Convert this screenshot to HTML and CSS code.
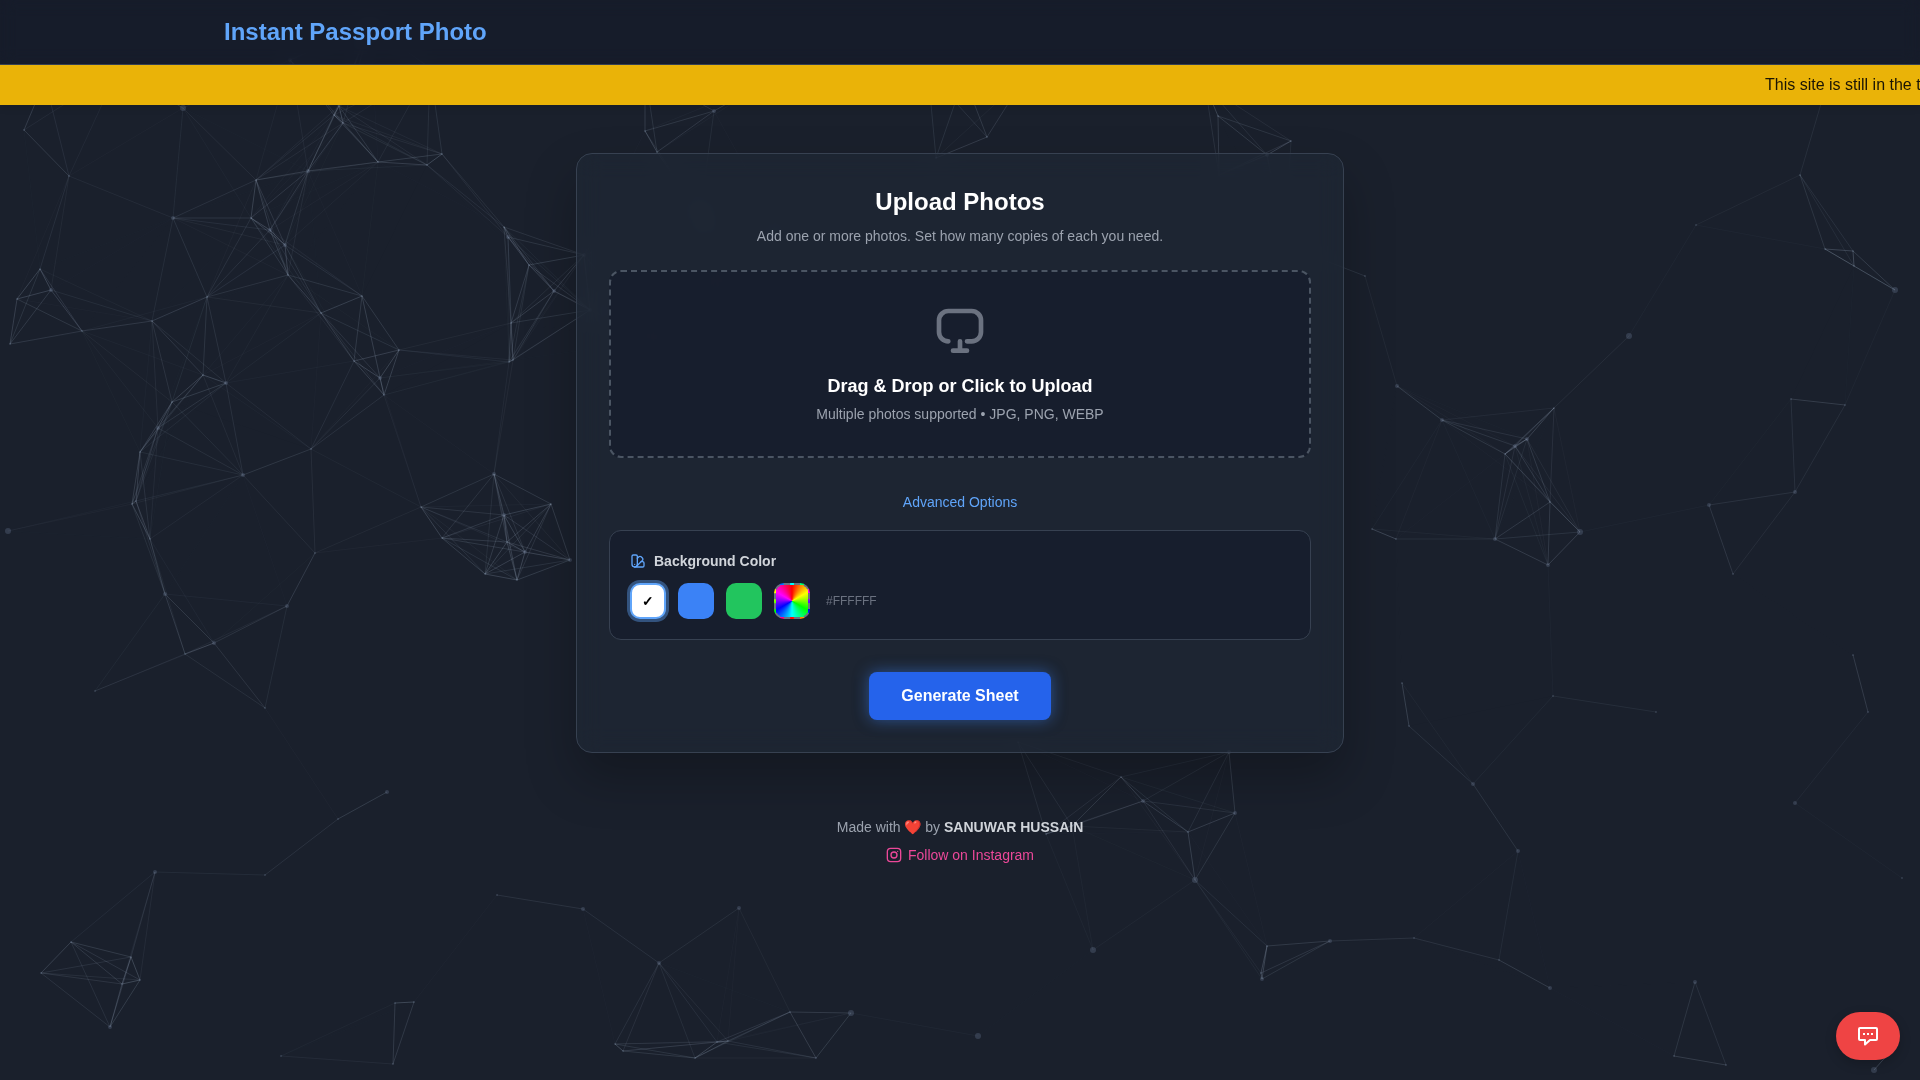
FILE: index.html
```html
<!DOCTYPE html>
<html lang="en">
<head>
    <meta charset="UTF-8">
    <meta name="viewport" content="width=device-width, initial-scale=1.0">
    <title>Instant Passport Photo</title>
    <link rel="stylesheet" href="styles.css">
</head>
<body>
    <canvas id="particles" class="particles"></canvas>

    <header class="site-header">
        <div class="container">
            <h1 class="logo">Instant Passport Photo</h1>
        </div>
    </header>

    <div class="notice">
        <span class="notice-text">This site is still in the testing phase.</span>
    </div>

    <main class="card">
        <h2 class="card-title">Upload Photos</h2>
        <p class="card-subtitle">Add one or more photos. Set how many copies of each you need.</p>

        <label class="drop-zone" for="photo-input">
            <svg class="drop-icon" viewBox="0 0 24 24" fill="none" stroke="currentColor" stroke-width="2" stroke-linecap="round" stroke-linejoin="round">
                <path d="M7 16a4 4 0 0 1-4-4V7a4 4 0 0 1 4-4h10a4 4 0 0 1 4 4v5a4 4 0 0 1-4 4h-2M12 16v4M9 20h6"/>
            </svg>
            <span class="drop-title">Drag &amp; Drop or Click to Upload</span>
            <span class="drop-hint">Multiple photos supported • JPG, PNG, WEBP</span>
            <input type="file" id="photo-input" class="hidden-input" accept="image/*" multiple>
        </label>

        <button type="button" class="advanced-toggle">Advanced Options</button>

        <section class="options">
            <h3 class="options-title">
                <svg class="options-icon" viewBox="0 0 24 24" fill="none" stroke="currentColor" stroke-width="2" stroke-linecap="round" stroke-linejoin="round">
                    <path d="M11 17a4 4 0 0 1-8 0V5a2 2 0 0 1 2-2h4a2 2 0 0 1 2 2Z"/>
                    <path d="M16.7 13H19a2 2 0 0 1 2 2v4a2 2 0 0 1-2 2H7"/>
                    <path d="M7 17h.01"/>
                    <path d="m11 8 2.3-2.3a2.4 2.4 0 0 1 3.404.004L18.6 7.6a2.4 2.4 0 0 1 .026 3.434L9.9 19.8"/>
                </svg>
                Background Color
            </h3>
            <div class="swatches">
                <button type="button" class="swatch white active" aria-label="White">✓</button>
                <button type="button" class="swatch blue" aria-label="Blue"></button>
                <button type="button" class="swatch green" aria-label="Green"></button>
                <label class="swatch custom" for="custom-color">
                    <input type="color" id="custom-color" class="hidden-input" value="#ffffff" aria-label="Custom color">
                </label>
                <span class="hex">#FFFFFF</span>
            </div>
        </section>

        <button type="button" class="generate">Generate Sheet</button>
    </main>

    <footer class="site-footer">
        <p>Made with ❤️ by <strong>SANUWAR HUSSAIN</strong></p>
        <a href="#" class="instagram">
            <svg class="instagram-icon" viewBox="0 0 24 24" fill="none" stroke="currentColor" stroke-width="2" stroke-linecap="round">
                <rect x="2" y="2" width="20" height="20" rx="5"/>
                <circle cx="12" cy="12" r="4.5"/>
                <path d="M17.5 6.5h.01"/>
            </svg>
            Follow on Instagram
        </a>
    </footer>

    <button type="button" class="chat" aria-label="Feedback">
        <svg class="chat-icon" viewBox="0 0 24 24">
            <path fill="none" stroke="currentColor" stroke-width="2" stroke-linejoin="round" d="M4 4h16a1 1 0 0 1 1 1v10a1 1 0 0 1-1 1h-6l-5 4.5V16H4a1 1 0 0 1-1-1V5a1 1 0 0 1 1-1z"/>
            <path fill="currentColor" d="M7 9h2v2H7zM11 9h2v2h-2zM15 9h2v2h-2z"/>
        </svg>
    </button>

    <script src="particles.js"></script>
</body>
</html>
```

FILE: styles.css
```css
* {
    box-sizing: border-box;
    margin: 0;
    padding: 0;
}
body {
    min-height: 100vh;
    background-color: #1a202c;
    color: #fff;
    font-family: "Liberation Sans", Arial, sans-serif;
    font-size: 14px;
    line-height: 20px;
    overflow-x: hidden;
}
button {
    font-family: inherit;
    border: none;
    cursor: pointer;
}
.particles {
    position: fixed;
    top: 0;
    left: 0;
    width: 100%;
    height: 100%;
    z-index: -1;
}

/* header */
.site-header {
    background-color: rgba(17, 24, 39, 0.5);
    border-bottom: 1px solid #374151;
    backdrop-filter: blur(8px);
}
.container {
    max-width: 1536px;
    margin: 0 auto;
    padding: 16px 32px;
}
.logo {
    color: #60a5fa;
    font-size: 24px;
    line-height: 32px;
}
.notice {
    background-color: #eab308;
    color: #1a1505;
    padding: 8px 0;
    font-size: 16px;
    line-height: 24px;
    white-space: nowrap;
    overflow: hidden;
    box-shadow: 0 4px 6px rgba(0, 0, 0, 0.1);
}
.notice-text {
    margin-left: calc(100% - 155px);
}

/* upload card */
.card {
    display: flex;
    flex-direction: column;
    align-items: center;
    max-width: 768px;
    margin: 48px auto 0;
    padding: 32px;
    background-color: rgba(31, 41, 55, 0.5);
    border: 1px solid #374151;
    border-radius: 16px;
    backdrop-filter: blur(12px);
    box-shadow: 0 25px 50px rgba(0, 0, 0, 0.25);
}
.card-title {
    font-size: 24px;
    line-height: 32px;
    margin-bottom: 8px;
}
.card-subtitle {
    color: #9ca3af;
    margin-bottom: 24px;
}
.drop-zone {
    display: flex;
    flex-direction: column;
    align-items: center;
    width: 100%;
    padding: 32px;
    background-color: rgba(17, 24, 39, 0.5);
    border: 2px dashed #4b5563;
    border-radius: 12px;
    cursor: pointer;
}
.drop-icon {
    width: 56px;
    height: 56px;
    margin-bottom: 12px;
    color: #6b7280;
}
.drop-title {
    font-size: 18px;
    font-weight: bold;
    line-height: 28px;
    margin-bottom: 4px;
}
.drop-hint {
    color: #9ca3af;
}
.hidden-input {
    position: absolute;
    width: 1px;
    height: 1px;
    opacity: 0;
}
.advanced-toggle {
    margin: 32px 0 16px;
    background: none;
    color: #60a5fa;
    font-size: 14px;
    line-height: 24px;
}
.options {
    width: 100%;
    padding: 20px;
    background-color: rgba(17, 24, 39, 0.5);
    border: 1px solid #374151;
    border-radius: 12px;
}
.options-title {
    display: flex;
    align-items: center;
    gap: 8px;
    margin-bottom: 12px;
    color: #d1d5db;
    font-size: 14px;
}
.options-icon {
    width: 16px;
    height: 16px;
    color: #60a5fa;
}
.swatches {
    display: flex;
    align-items: center;
    gap: 12px;
}
.swatch {
    width: 36px;
    height: 36px;
    border: 2px solid transparent;
    border-radius: 10px;
    color: #000;
    font-size: 14px;
    font-weight: bold;
    cursor: pointer;
}
.swatch.active {
    border-color: #60a5fa;
    box-shadow: 0 0 0 3px rgba(96, 165, 250, 0.4);
}
.white {
    background-color: #fff;
}
.blue {
    background-color: #3b82f6;
}
.green {
    background-color: #22c55e;
}
.custom {
    background: conic-gradient(red, yellow, lime, aqua, blue, magenta, red);
    border: 2px dashed #6b7280;
}
.hex {
    margin-left: 4px;
    color: #6b7280;
    font-size: 12px;
}
.generate {
    margin-top: 32px;
    padding: 12px 32px;
    background-color: #2563eb;
    color: #fff;
    border-radius: 8px;
    font-size: 16px;
    font-weight: bold;
    line-height: 24px;
    box-shadow: 0 0 15px rgba(59, 130, 246, 0.5);
}

/* footer */
.site-footer {
    display: flex;
    flex-direction: column;
    align-items: center;
    gap: 8px;
    padding: 64px 16px 24px;
    color: #9ca3af;
}
.site-footer strong {
    color: #d1d5db;
}
.instagram {
    display: flex;
    align-items: center;
    gap: 6px;
    color: #ec4899;
    text-decoration: none;
}
.instagram-icon {
    width: 16px;
    height: 16px;
}
.chat {
    position: fixed;
    right: 20px;
    bottom: 20px;
    padding: 12px 20px;
    background-color: #ef4444;
    color: #fff;
    border-radius: 24px;
    box-shadow: 0 4px 12px rgba(0, 0, 0, 0.2);
}
.chat-icon {
    display: block;
    width: 24px;
    height: 24px;
}
```

FILE: particles.js
```javascript
const LINK_DISTANCE = 150;

// x, y, radius
const nodes = [
    // top left
    [24, 130, 1], [69, 176, 1], [40, 269, 1], [17, 299, 1], [51, 290, 2], [10, 344, 1],
    [82, 331, 1], [152, 321, 1], [207, 297, 1], [173, 218, 2], [183, 108, 3], [256, 180, 1],
    [251, 218, 1], [270, 230, 2], [285, 245, 2], [288, 275, 1], [308, 171, 2], [321, 313, 1],
    [362, 296, 1], [399, 350, 1], [378, 162, 1], [427, 165, 1], [442, 154, 1], [343, 123, 1],
    [334, 115, 1], [339, 106, 1], [45, 80, 1], [118, 70, 1], [290, 60, 2], [370, 25, 3],
    [430, 68, 1], [504, 227, 1], [508, 237, 2], [529, 265, 1], [554, 291, 2], [511, 323, 1],
    [584, 255, 2], [590, 310, 2],
    // left
    [354, 361, 1], [380, 378, 2], [384, 395, 1], [509, 362, 1], [513, 360, 1], [203, 375, 1],
    [226, 383, 2], [172, 402, 1], [158, 428, 2], [140, 452, 1], [243, 475, 2], [311, 449, 1],
    [132, 504, 1], [136, 501, 1], [150, 539, 1], [315, 553, 1], [165, 594, 2], [287, 606, 2],
    [214, 643, 2], [185, 654, 1], [95, 691, 1], [265, 708, 1], [8, 531, 3], [494, 474, 2],
    [551, 504, 1], [421, 507, 1], [442, 538, 1], [504, 515, 2], [507, 542, 1], [525, 552, 2],
    [485, 574, 1], [517, 580, 1], [570, 560, 2],
    // behind the header and the card
    [645, 131, 1], [657, 152, 1], [714, 111, 2], [645, 72, 1], [765, 82, 1], [987, 137, 1],
    [936, 158, 1], [928, 72, 1], [964, 77, 1], [1025, 77, 1], [1218, 116, 1], [1291, 141, 1],
    [1267, 155, 2], [1205, 85, 1], [1219, 175, 1], [1365, 276, 1], [1285, 245, 2], [700, 215, 3],
    [780, 230, 3], [720, 285, 3], [655, 340, 3], [730, 490, 3], [860, 665, 3], [1018, 742, 1],
    // right
    [1397, 386, 2], [1442, 420, 2], [1554, 408, 1], [1527, 439, 2], [1515, 446, 2], [1505, 454, 1],
    [1550, 502, 1], [1495, 539, 2], [1548, 565, 2], [1580, 532, 3], [1396, 539, 1], [1372, 529, 1],
    [1709, 505, 2], [1795, 492, 2], [1791, 399, 1], [1845, 405, 1], [1733, 574, 1], [1853, 655, 1],
    [1868, 712, 1], [1553, 696, 1], [1656, 712, 1], [1402, 683, 1], [1409, 726, 1], [1629, 336, 3],
    [1800, 175, 1], [1825, 249, 1], [1853, 251, 1], [1854, 266, 1], [1895, 290, 3], [1828, 80, 1],
    [1696, 225, 1],
    // bottom right
    [1229, 752, 2], [1121, 777, 1], [1143, 801, 2], [1235, 813, 2], [1188, 832, 1], [1195, 880, 3],
    [1093, 950, 3], [1046, 834, 1], [1072, 826, 1], [1267, 946, 1], [1262, 979, 2], [1261, 973, 1],
    [1330, 941, 2], [1414, 938, 1], [1499, 960, 1], [1550, 988, 2], [1518, 851, 2], [1473, 784, 2],
    [1695, 982, 2], [1674, 1056, 1], [1726, 1065, 1], [1874, 1070, 3], [1890, 1052, 1],
    [1795, 803, 2], [1902, 878, 1],
    // bottom left
    [387, 792, 2], [338, 819, 1], [265, 875, 1], [155, 872, 2], [71, 942, 1], [131, 957, 1],
    [41, 973, 1], [122, 984, 1], [140, 980, 1], [110, 1027, 2], [414, 1002, 1], [395, 1003, 1],
    [393, 1064, 1], [281, 1056, 1], [497, 895, 1], [583, 909, 2], [659, 963, 2], [739, 908, 2],
    [615, 1044, 1], [623, 1051, 1], [695, 1058, 1], [717, 1042, 1], [728, 1041, 1], [790, 1012, 1],
    [851, 1013, 3], [816, 1058, 1], [978, 1036, 3]
];

const canvas = document.getElementById('particles');
const ctx = canvas.getContext('2d');

function draw() {
    canvas.width = window.innerWidth;
    canvas.height = window.innerHeight;

    nodes.forEach(([x, y, r], i) => {
        ctx.fillStyle = 'rgba(100, 116, 139, 0.35)';
        ctx.beginPath();
        ctx.arc(x, y, r, 0, Math.PI * 2);
        ctx.fill();

        // join every pair that is close enough, fading with distance
        for (let j = i + 1; j < nodes.length; j++) {
            const [x2, y2] = nodes[j];
            const distance = Math.hypot(x - x2, y - y2);
            if (distance < LINK_DISTANCE) {
                ctx.strokeStyle = `rgba(148, 163, 184, ${0.34 * (1 - distance / LINK_DISTANCE)})`;
                ctx.beginPath();
                ctx.moveTo(x, y);
                ctx.lineTo(x2, y2);
                ctx.stroke();
            }
        }
    });
}

draw();
window.addEventListener('resize', draw);
```
